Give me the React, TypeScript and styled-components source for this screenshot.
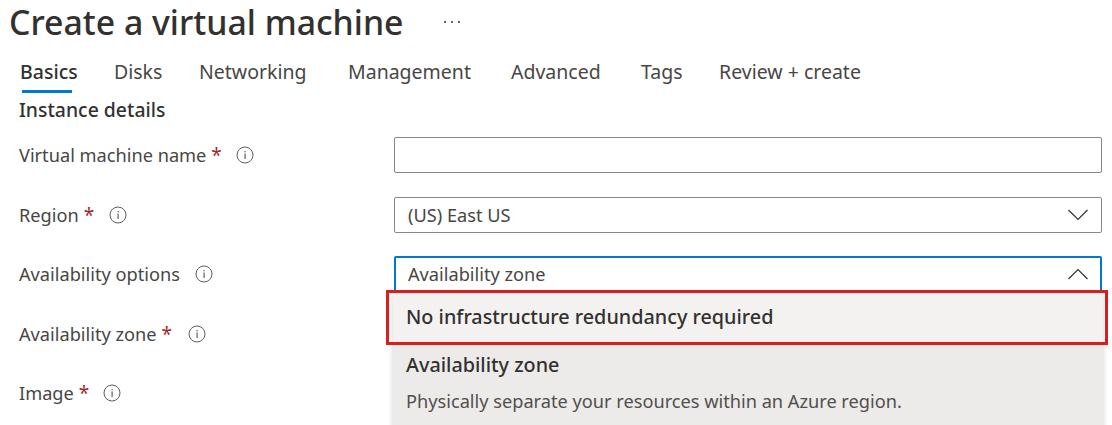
import styled, { createGlobalStyle } from 'styled-components';

const GlobalStyle = createGlobalStyle`
  html, body { margin: 0; padding: 0; background: #fff; overflow: hidden; }
  body { font-family: "Noto Sans", "Open Sans", sans-serif; color: #323130; }
`;

const Page = styled.div`
  width: 1112px;
  height: 425px;
  overflow: hidden;
`;

const TitleRow = styled.div`
  display: flex;
  align-items: center;
  height: 44px;
  padding-left: 9px;
  margin-bottom: 3px;
`;

const Title = styled.h1`
  margin: 0;
  font-size: 33.8px;
  font-weight: 500;
  line-height: 44px;
  color: #323130;
  white-space: nowrap;
`;

const More = styled.svg`
  margin-left: 39px;
  margin-top: -1px;
  width: 18px;
  height: 4px;
`;

const Tabs = styled.div`
  display: flex;
  height: 46px;
  padding-left: 20px;
`;

const Tab = styled.div<{ $active?: boolean; $width: number }>`
  position: relative;
  width: ${p => p.$width}px;
  padding-top: 12px;
  font-size: 19.5px;
  line-height: 26px;
  font-weight: ${p => (p.$active ? 500 : 400)};
  color: ${p => (p.$active ? '#323130' : '#484644')};
  white-space: nowrap;

  &::after {
    display: ${p => (p.$active ? 'block' : 'none')};
    content: '';
    position: absolute;
    left: 2px;
    top: 43px;
    width: 50px;
    height: 3px;
    background: #0078d4;
  }
`;

const SectionHeading = styled.div`
  padding: 4px 0 0 19px;
  height: 26px;
  font-size: 19.4px;
  line-height: 26px;
  font-weight: 500;
  color: #323130;
`;

const Form = styled.div`
  position: relative;
  display: flex;
  flex-direction: column;
  padding: 14px 10px 0 19px;
`;

const Row = styled.div`
  display: grid;
  grid-template-columns: 375px 708px;
  align-items: center;
  height: 36px;
  margin-bottom: 23.5px;
`;

const Label = styled.div`
  display: flex;
  align-items: center;
  font-size: 18.2px;
  line-height: 24px;
  color: #484644;
  white-space: nowrap;
`;

const Required = styled.span`
  margin-left: 5px;
  color: #a4262c;
  font-size: 19px;
`;

const InfoIcon = styled.svg<{ $gap: number }>`
  margin-left: ${p => p.$gap}px;
  width: 18px;
  height: 18px;
  flex: none;
`;

const Field = styled.div<{ $focused?: boolean }>`
  box-sizing: border-box;
  display: flex;
  align-items: center;
  justify-content: space-between;
  height: 36px;
  padding: 0 ${p => (p.$focused ? 12 : 13)}px 0 ${p => (p.$focused ? 12 : 13)}px;
  border: ${p => (p.$focused ? '2px solid #0078d4' : '1px solid #8a8886')};
  border-radius: 2px;
  background: #fff;
  font-size: 18.2px;
  color: #484644;
`;

const Chevron = styled.svg`
  width: 20px;
  height: 12px;
  flex: none;
`;

const Dropdown = styled.div`
  position: absolute;
  left: 393px;
  top: 169px;
  width: 710px;
  height: 140px;
  box-shadow: 0 2px 6px rgba(0, 0, 0, 0.18);
  background: #edebe9;
`;

const Option = styled.div<{ $highlighted?: boolean; $height: number }>`
  box-sizing: border-box;
  height: ${p => p.$height}px;
  padding: ${p => (p.$highlighted ? 12 : 8)}px 13px 0;
  background: ${p => (p.$highlighted ? '#f3f2f1' : '#edebe9')};
`;

const OptionTitle = styled.div`
  font-size: 19.8px;
  line-height: 26px;
  font-weight: 500;
  color: #323130;
  white-space: nowrap;
`;

const OptionDescription = styled.div`
  margin-top: 11px;
  font-size: 18.2px;
  line-height: 24px;
  color: #524f4d;
  white-space: nowrap;
`;

const Callout = styled.div`
  position: absolute;
  left: 386px;
  top: 167px;
  width: 722px;
  height: 55px;
  box-sizing: border-box;
  border: 3px solid #d91e1e;
`;

const tabs = [
  { label: 'Basics', width: 94 },
  { label: 'Disks', width: 85 },
  { label: 'Networking', width: 149 },
  { label: 'Management', width: 163 },
  { label: 'Advanced', width: 130 },
  { label: 'Tags', width: 78 },
  { label: 'Review + create', width: 160 },
];

function Info({ gap }: { gap: number }) {
  return (
    <InfoIcon $gap={gap} viewBox="0 0 18 18" fill="none">
      <circle cx="9" cy="9" r="8" stroke="#605e5c" strokeWidth="1" />
      <rect x="8.5" y="7.5" width="1.2" height="5.5" fill="#605e5c" />
      <rect x="8.5" y="5" width="1.2" height="1.3" fill="#605e5c" />
    </InfoIcon>
  );
}

function Caret({ up }: { up?: boolean }) {
  return (
    <Chevron viewBox="0 0 20 12" fill="none">
      <path d={up ? 'M0.5 11 L10 1.5 L19.5 11' : 'M0.5 1 L10 10.5 L19.5 1'} stroke="#323130" strokeWidth="1.2" />
    </Chevron>
  );
}

export default function App() {
  return (
    <Page>
      <GlobalStyle />
      <TitleRow>
        <Title>Create a virtual machine</Title>
        <More viewBox="0 0 18 4">
          <circle cx="2" cy="2" r="1" fill="#323130" />
          <circle cx="9" cy="2" r="1" fill="#323130" />
          <circle cx="16" cy="2" r="1" fill="#323130" />
        </More>
      </TitleRow>
      <Tabs>
        {tabs.map((t, i) => (
          <Tab key={t.label} $active={i === 0} $width={t.width}>
            {t.label}
          </Tab>
        ))}
      </Tabs>
      <SectionHeading>Instance details</SectionHeading>
      <Form>
        <Row>
          <Label>
            Virtual machine name<Required>*</Required>
            <Info gap={14} />
          </Label>
          <Field />
        </Row>
        <Row>
          <Label>
            Region<Required>*</Required>
            <Info gap={15} />
          </Label>
          <Field>
            (US) East US
            <Caret />
          </Field>
        </Row>
        <Row>
          <Label>
            Availability options
            <Info gap={15} />
          </Label>
          <Field $focused>
            Availability zone
            <Caret up />
          </Field>
        </Row>
        <Row>
          <Label>
            Availability zone<Required>*</Required>
            <Info gap={16} />
          </Label>
        </Row>
        <Row>
          <Label>
            Image<Required>*</Required>
            <Info gap={14} />
          </Label>
        </Row>
        <Dropdown>
          <Option $highlighted $height={52}>
            <OptionTitle>No infrastructure redundancy required</OptionTitle>
          </Option>
          <Option $height={88}>
            <OptionTitle>Availability zone</OptionTitle>
            <OptionDescription>Physically separate your resources within an Azure region.</OptionDescription>
          </Option>
        </Dropdown>
        <Callout />
      </Form>
    </Page>
  );
}
